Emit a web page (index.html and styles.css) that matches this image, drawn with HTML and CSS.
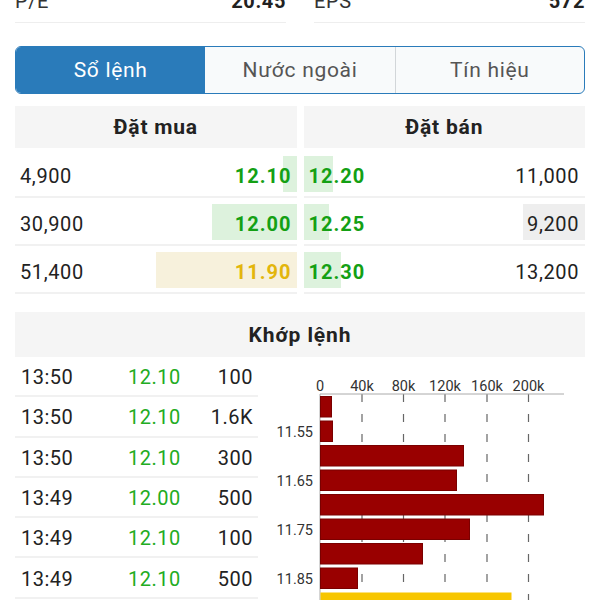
FILE: index.html
```html
<!DOCTYPE html>
<html lang="vi">
<head>
    <meta charset="UTF-8">
    <meta name="viewport" content="width=device-width, initial-scale=1.0">
    <title>Sổ lệnh</title>
    <link rel="stylesheet" href="styles.css">
</head>
<body>

<div class="page">
    <div class="stats">
        <div class="stat"><span>P/E</span><b>20.45</b></div>
        <div class="stat"><span>EPS</span><b>572</b></div>
    </div>

    <div class="tabs">
        <div class="tab active">Sổ lệnh</div>
        <div class="tab">Nước ngoài</div>
        <div class="tab">Tín hiệu</div>
    </div>

    <div class="book">
        <div class="book-side bid">
            <div class="book-head">Đặt mua</div>
            <div class="book-row">
                <span class="bar bar-up" style="width:14px"></span>
                <span class="vol">4,900</span><span class="price up">12.10</span>
            </div>
            <div class="book-row">
                <span class="bar bar-up" style="width:85px"></span>
                <span class="vol">30,900</span><span class="price up">12.00</span>
            </div>
            <div class="book-row">
                <span class="bar bar-ref" style="width:141px"></span>
                <span class="vol">51,400</span><span class="price ref">11.90</span>
            </div>
        </div>
        <div class="book-side ask">
            <div class="book-head">Đặt bán</div>
            <div class="book-row">
                <span class="bar bar-up" style="width:29px"></span>
                <span class="price up">12.20</span><span class="vol">11,000</span>
            </div>
            <div class="book-row">
                <span class="bar bar-up" style="width:25px"></span>
                <span class="bar bar-vol" style="width:62px"></span>
                <span class="price up">12.25</span><span class="vol">9,200</span>
            </div>
            <div class="book-row">
                <span class="bar bar-up" style="width:37px"></span>
                <span class="price up">12.30</span><span class="vol">13,200</span>
            </div>
        </div>
    </div>

    <div class="match">
        <div class="match-head">Khớp lệnh</div>
        <div class="match-body">
            <div class="trades">
                <div class="trade"><span>13:50</span><span class="t-price">12.10</span><span class="t-vol">100</span></div>
                <div class="trade"><span>13:50</span><span class="t-price">12.10</span><span class="t-vol">1.6K</span></div>
                <div class="trade"><span>13:50</span><span class="t-price">12.10</span><span class="t-vol">300</span></div>
                <div class="trade"><span>13:49</span><span class="t-price">12.00</span><span class="t-vol">500</span></div>
                <div class="trade"><span>13:49</span><span class="t-price">12.10</span><span class="t-vol">100</span></div>
                <div class="trade"><span>13:49</span><span class="t-price">12.10</span><span class="t-vol">500</span></div>
            </div>

            <svg class="chart" width="327" height="243" viewBox="0 0 327 243">
                <!-- grid -->
                <g class="grid">
                    <line x1="104" y1="37" x2="104" y2="243"/>
                    <line x1="145.5" y1="37" x2="145.5" y2="243"/>
                    <line x1="187" y1="37" x2="187" y2="243"/>
                    <line x1="229" y1="37" x2="229" y2="243"/>
                    <line x1="270.5" y1="37" x2="270.5" y2="243"/>
                </g>
                <line class="axis" x1="62" y1="37" x2="306" y2="37"/>
                <line class="axis" x1="62" y1="37" x2="62" y2="243"/>

                <g class="tick-x">
                    <text x="62" y="34">0</text>
                    <text x="104" y="34">40k</text>
                    <text x="145.5" y="34">80k</text>
                    <text x="187" y="34">120k</text>
                    <text x="229" y="34">160k</text>
                    <text x="270.5" y="34">200k</text>
                </g>
                <g class="tick-y">
                    <text x="55" y="80">11.55</text>
                    <text x="55" y="129">11.65</text>
                    <text x="55" y="178">11.75</text>
                    <text x="55" y="227">11.85</text>
                </g>

                <g class="vol-bar">
                    <rect x="62.5" y="39.5" width="11" height="20.5"/>
                    <rect x="62.5" y="64" width="12" height="20.5"/>
                    <rect x="62.5" y="88.5" width="143" height="20.5"/>
                    <rect x="62.5" y="113" width="136" height="20.5"/>
                    <rect x="62.5" y="137.5" width="223" height="20.5"/>
                    <rect x="62.5" y="162" width="149" height="20.5"/>
                    <rect x="62.5" y="186.5" width="102" height="20.5"/>
                    <rect x="62.5" y="211" width="37" height="20.5"/>
                </g>
                <rect class="vol-bar-ref" x="62.5" y="235.5" width="191" height="20.5"/>
            </svg>
        </div>
    </div>
</div>

</body>
</html>
```

FILE: styles.css
```css
html, body { margin: 0; padding: 0; height: 600px; overflow: hidden; }
body { font-family: Roboto, "Liberation Sans", sans-serif; color: #222; background: #fff; }
.page { padding: 0 15px; }

.stats { display: grid; grid-template-columns: 1fr 1fr; column-gap: 28px; margin-top: -13px; }
.stat { display: flex; justify-content: space-between; font-size: 20px; line-height: 28px; padding-bottom: 7px; border-bottom: 1px solid #eeeeee; color: #333; letter-spacing: 0.6px; }
.stat b { color: #222; }

.tabs { display: grid; grid-template-columns: repeat(3, 1fr); margin-top: 23px; height: 48px; box-sizing: border-box; border: 1.5px solid #2a7bba; border-radius: 6px; overflow: hidden; background: #f8fafb; }
.tab { display: flex; align-items: center; justify-content: center; font-size: 21px; letter-spacing: 0.7px; color: #555; border-left: 1px solid #d2d6d9; }
.tab:first-child { border-left: none; }
.tab.active { background: #2a7bba; color: #fff; }
.tab + .tab.active, .tab.active + .tab { border-left: none; }

.book { display: grid; grid-template-columns: 1fr 1fr; column-gap: 7px; margin-top: 12px; }
.book-head { height: 42px; margin-bottom: 2px; display: flex; align-items: center; justify-content: center; background: #f5f5f5; font-size: 21px; letter-spacing: 0.8px; font-weight: bold; color: #222; }
.book-row { position: relative; display: flex; justify-content: space-between; align-items: center; height: 48px; box-sizing: border-box; padding: 6px 5px 0 5px; border-bottom: 2px solid #f1f1f1; font-size: 20px; letter-spacing: 0.6px; }
.ask .book-row { padding-right: 6px; }
.book-row span { position: relative; }
.book-row .bar { position: absolute; top: 6px; height: 36px; }
.bid .bar { right: 0; }
.ask .bar { left: 0; }
.ask .bar-vol { left: auto; right: 0; }
.bar-up { background: #ddf2dd; }
.bar-ref { background: #f7f1dc; }
.bar-vol { background: #eeeeee; }
.vol { color: #222; }
.price { font-weight: bold; letter-spacing: 1px; }
.up { color: #14a014; }
.ref { color: #e3b60c; }

.match { margin-top: 18px; }
.match-head { height: 45px; display: flex; align-items: center; justify-content: center; background: #f5f5f5; font-size: 21px; letter-spacing: 0.9px; font-weight: bold; color: #222; }
.match-body { display: flex; }
.trades { width: 243px; flex: none; }
.trade { display: grid; grid-template-columns: 107px auto 1fr; align-items: center; height: 40.3px; box-sizing: border-box; padding: 2px 5px 0 6px; border-bottom: 2px solid #f1f1f1; font-size: 20px; color: #222; letter-spacing: 0.5px; }
.t-price { color: #22ac22; }
.t-vol { text-align: right; }

.chart { display: block; flex: none; }
.chart text { font-family: Roboto, "Liberation Sans", sans-serif; font-size: 14.5px; fill: #333; }
.tick-x text { text-anchor: middle; }
.tick-y text { text-anchor: end; }
.grid line { stroke: #666; stroke-width: 1.2; stroke-dasharray: 8 12; }
.axis { stroke: #aaa; stroke-width: 1; }
.vol-bar rect { fill: #990000; stroke: #7a0000; stroke-width: 1; }
.vol-bar-ref { fill: #f7c600; }
```
